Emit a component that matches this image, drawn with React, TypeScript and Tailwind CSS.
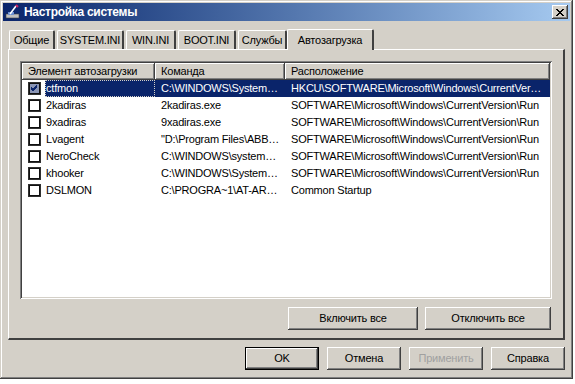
import React from 'react';

const FONT = { fontFamily: '"Liberation Sans", Tahoma, sans-serif' };

interface Row {
  name: string;
  cmd: string;
  loc: string;
  checked?: boolean;
}

const ROWS: Row[] = [
  { name: 'ctfmon', cmd: 'C:\\WINDOWS\\System…', loc: 'HKCU\\SOFTWARE\\Microsoft\\Windows\\CurrentVer…', checked: true },
  { name: '2kadiras', cmd: '2kadiras.exe', loc: 'SOFTWARE\\Microsoft\\Windows\\CurrentVersion\\Run' },
  { name: '9xadiras', cmd: '9xadiras.exe', loc: 'SOFTWARE\\Microsoft\\Windows\\CurrentVersion\\Run' },
  { name: 'Lvagent', cmd: '"D:\\Program Files\\ABB…', loc: 'SOFTWARE\\Microsoft\\Windows\\CurrentVersion\\Run' },
  { name: 'NeroCheck', cmd: 'C:\\WINDOWS\\system…', loc: 'SOFTWARE\\Microsoft\\Windows\\CurrentVersion\\Run' },
  { name: 'khooker', cmd: 'C:\\WINDOWS\\System…', loc: 'SOFTWARE\\Microsoft\\Windows\\CurrentVersion\\Run' },
  { name: 'DSLMON', cmd: 'C:\\PROGRA~1\\AT-AR…', loc: 'Common Startup' },
];

const TABS: [string, string][] = [
  ['Общие', 'w-[46px]'],
  ['SYSTEM.INI', 'w-[67px]'],
  ['WIN.INI', 'w-[50px]'],
  ['BOOT.INI', 'w-[58px]'],
  ['Службы', 'w-[49px]'],
];

const raised =
  'shadow-[inset_-1px_-1px_#404040,inset_1px_1px_#ffffff,inset_-2px_-2px_#808080,inset_2px_2px_#d4d0c8]';

function Btn({ label, w, disabled, def }: { label: string; w: string; disabled?: boolean; def?: boolean }) {
  return (
    <div
      className={`${w} h-[23px] flex items-center justify-center bg-[#d4d0c8] text-[11px] ${
        def
          ? 'border border-black shadow-[inset_-1px_-1px_#404040,inset_1px_1px_#ffffff,inset_-2px_-2px_#808080]'
          : raised
      } ${disabled ? 'text-[#a0a0a0]' : 'text-black'}`}
    >
      {label}
    </div>
  );
}

function Check({ checked, selected }: { checked?: boolean; selected?: boolean }) {
  return (
    <div
      className={`w-[13px] h-[13px] shrink-0 flex items-center justify-center ${
        selected ? 'bg-[#8a95b5]' : 'bg-white'
      } shadow-[inset_0_0_0_1px_#303030,inset_0_0_0_2px_#101010]`}
    >
      {checked && (
        <svg width="9" height="9" viewBox="0 0 9 9">
          <path d="M1 4 L3 6 L7 2 M1 5 L3 7 L7 3 M1 3 L3 5 L7 1" stroke="#0a246a" strokeWidth="1" fill="none" />
        </svg>
      )}
    </div>
  );
}

export default function App() {
  return (
    <div className="w-[575px] h-[384px] bg-white overflow-hidden tracking-[-0.2px]" style={FONT}>
      <div className="w-[573px] h-[379px] bg-[#d4d0c8] p-[3px] flex flex-col shadow-[inset_-1px_-1px_#404040,inset_1px_1px_#d4d0c8,inset_-2px_-2px_#808080,inset_2px_2px_#ffffff]">
        {/* title bar */}
        <div className="h-[18px] flex items-center bg-gradient-to-r from-[#0a246a] to-[#a6caf0] pl-[2px] pr-[2px]">
          <svg width="16" height="16" viewBox="0 0 16 16" className="shrink-0">
            <rect x="1" y="10" width="13" height="4" fill="#c0c0c0" stroke="#404040" strokeWidth="0.6" />
            <rect x="3" y="8" width="6" height="3" fill="#6b8fd0" />
            <path d="M5 10 L11 2" stroke="#ffffff" strokeWidth="1.6" />
            <path d="M11 1 L13 3" stroke="#d02060" strokeWidth="2" />
          </svg>
          <span className="ml-[3px] text-white font-bold text-[12px] tracking-[-0.3px] leading-none">
            Настройка системы
          </span>
          <div className="ml-auto w-[16px] h-[14px] bg-[#d4d0c8] flex items-center justify-center shadow-[inset_-1px_-1px_#404040,inset_1px_1px_#ffffff,inset_-2px_-2px_#808080]">
            <svg width="8" height="7" viewBox="0 0 8 7">
              <path d="M0 0 L7 7 M1 0 L8 7 M7 0 L0 7 M8 0 L1 7" stroke="#000" strokeWidth="1" />
            </svg>
          </div>
        </div>

        {/* tabs */}
        <div className="flex items-end pl-[6px] mt-[7px] h-[21px] gap-[2px] relative z-10">
          {TABS.map(([t, w]) => (
            <div
              key={t}
              className={`${w} h-[19px] flex items-center justify-center text-[11px] text-black border-l border-t border-white border-r-2 border-r-[#404040] rounded-t-[2px]`}
            >
              {t}
            </div>
          ))}
          <div className="w-[87px] h-[21px] -ml-[2px] flex items-center justify-center text-[11px] text-black bg-[#d4d0c8] border-l border-t border-white border-r-2 border-r-[#404040] rounded-t-[2px] -mb-[1px]">
            Автозагрузка
          </div>
        </div>

        {/* tab panel */}
        <div className="mx-[5px] h-[291px] border-t border-l border-white border-r-2 border-b-2 border-r-[#404040] border-b-[#404040] px-[11px] pt-[11px] flex flex-col">
          <div className="h-[238px] bg-white shadow-[inset_1px_1px_#808080,inset_-1px_-1px_#ffffff,inset_2px_2px_#404040,inset_-2px_-2px_#d4d0c8] p-[2px] flex flex-col">
            {/* header */}
            <div className="flex h-[17px] text-[11px] text-black">
              {[
                ['Элемент автозагрузки', 'w-[133px]'],
                ['Команда', 'w-[130px]'],
                ['Расположение', 'w-[265px]'],
              ].map(([h, w]) => (
                <div key={h} className={`${w} bg-[#d4d0c8] ${raised} flex items-center pl-[6px]`}>
                  {h}
                </div>
              ))}
            </div>
            {ROWS.map((r, i) => {
              const sel = i === 0;
              return (
                <div key={r.name} className="flex h-[17px] text-[11px] items-center">
                  <div className="w-[133px] flex items-center pl-[6px] h-full">
                    <Check checked={r.checked} selected={sel} />
                    <div
                      className={`ml-[4px] h-full flex-1 flex items-center pl-[1px] ${
                        sel
                          ? 'bg-[#0a246a] text-white outline-1 outline-dotted outline-[#d4d0c8] -outline-offset-1'
                          : 'text-black'
                      }`}
                    >
                      {r.name}
                    </div>
                  </div>
                  <div className={`w-[130px] h-full flex items-center pl-[6px] ${sel ? 'bg-[#0a246a] text-white' : 'text-black'}`}>
                    {r.cmd}
                  </div>
                  <div className={`w-[265px] h-full flex items-center pl-[6px] ${sel ? 'bg-[#0a246a] text-white' : 'text-black'}`}>
                    {r.loc}
                  </div>
                </div>
              );
            })}
          </div>
          <div className="flex justify-end gap-[7px] mt-[8px] pr-[1px]">
            <Btn label="Включить все" w="w-[130px]" />
            <Btn label="Отключить все" w="w-[126px]" />
          </div>
        </div>

        {/* bottom buttons */}
        <div className="flex justify-end gap-[8px] mt-[7px] pr-[5px]">
          <Btn label="OK" w="w-[74px]" def />
          <Btn label="Отмена" w="w-[74px]" />
          <Btn label="Применить" w="w-[74px]" disabled />
          <Btn label="Справка" w="w-[74px]" />
        </div>
      </div>
    </div>
  );
}
